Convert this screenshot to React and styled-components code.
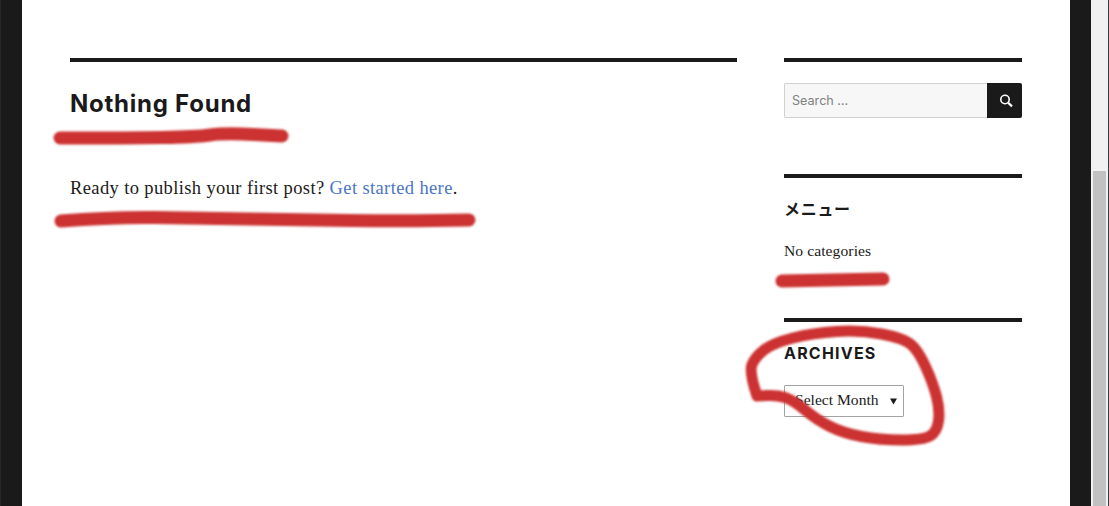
import React from "react";
import styled, { createGlobalStyle } from "styled-components";

const sansStack = `Inter, "Noto Sans CJK JP", sans-serif`;
const serifStack = `"Liberation Serif", "DejaVu Serif", serif`;

const GlobalStyle = createGlobalStyle`
  html, body {
    margin: 0;
    padding: 0;
    height: 100%;
    overflow: hidden;
    background: #fff;
  }
  * {
    box-sizing: border-box;
  }
`;

const Page = styled.div`
  position: relative;
  display: flex;
  width: 1109px;
  height: 506px;
  overflow: hidden;
  color: #1a1a1a;
`;

const Frame = styled.div`
  flex: none;
  width: ${props => props.width}px;
  background: #1a1a1a;
  border-left: ${props => (props.edge ? "1px solid #23282d" : "none")};
`;

const Content = styled.div`
  flex: 1;
  display: flex;
  gap: 47px;
  padding: 58px 48px 0;
  background: #fff;
`;

const Main = styled.main`
  width: 667px;
  border-top: 4px solid #1a1a1a;
`;

const PageTitle = styled.h1`
  margin: 26px 0 0;
  font-family: ${sansStack};
  font-size: 24px;
  line-height: 32px;
  font-weight: 700;
  letter-spacing: 0.75px;
`;

const Lead = styled.p`
  margin: 54px 0 0;
  font-family: ${serifStack};
  font-size: 18.5px;
  line-height: 28px;
  letter-spacing: 0.38px;
  color: #1a1a1a;

  a {
    color: #4b75c4;
    text-decoration: none;
  }
`;

const Sidebar = styled.aside`
  width: 238px;
`;

const Widget = styled.section`
  height: ${props => props.height}px;
  border-top: 4px solid #1a1a1a;
`;

const SearchForm = styled.form`
  display: flex;
  height: 35px;
  margin-top: 21px;
`;

const SearchInput = styled.input`
  flex: 1;
  min-width: 0;
  padding: 0 7px;
  border: 1px solid #d1d1d1;
  border-right: none;
  border-radius: 2px 0 0 2px;
  background: #f7f7f7;
  font-family: ${sansStack};
  font-size: 12.6px;
  outline: none;

  &::placeholder {
    color: #808080;
    opacity: 1;
  }
`;

const SearchButton = styled.button`
  flex: none;
  display: flex;
  align-items: center;
  justify-content: center;
  width: 35px;
  padding: 0;
  border: none;
  border-radius: 0 2px 2px 0;
  background: #1a1a1a;
`;

const WidgetTitle = styled.h2`
  margin: 20px 0 0;
  font-family: ${sansStack};
  font-size: 16px;
  line-height: 23px;
  font-weight: 700;
  letter-spacing: ${props => (props.caps ? "1.2px" : "0.7px")};
  text-transform: ${props => (props.caps ? "uppercase" : "none")};
`;

const SmallText = styled.p`
  margin: 18px 0 0;
  font-family: ${serifStack};
  font-size: 15.6px;
  line-height: 23px;
  letter-spacing: 0.08px;
`;

const SelectWrap = styled.div`
  position: relative;
  width: 120px;
  height: 32px;
  margin-top: 20px;
`;

const MonthSelect = styled.select`
  appearance: none;
  display: block;
  width: 100%;
  height: 100%;
  padding: 0 0 4px 10px;
  border: 1px solid #a3a3a3;
  border-radius: 1px;
  background: #fff;
  color: #1a1a1a;
  font-family: ${serifStack};
  font-size: 15.6px;
`;

const Arrow = styled.svg`
  position: absolute;
  top: 13px;
  right: 7px;
  pointer-events: none;
`;

const Scrollbar = styled.div`
  flex: none;
  display: flex;
  align-items: flex-end;
  justify-content: center;
  width: 17px;
  background: #f1f1f1;
`;

const ScrollThumb = styled.div`
  width: 13px;
  height: 335px;
  background: #c1c1c1;
`;

const Edge = styled.div`
  flex: none;
  width: 1px;
  background: #3a3d42;
`;

const Scribbles = styled.svg`
  position: absolute;
  inset: 0;
  pointer-events: none;
`;

// red marker strokes somebody drew over the screenshot
const marks = [
  { width: 13, points: [[60, 138], [130, 138], [195, 137], [225, 133], [282, 136]] },
  { width: 13, points: [[61, 221], [110, 217], [200, 218], [300, 220], [400, 221], [469, 220]] },
  { width: 13, points: [[782, 281], [830, 280], [883, 279]] },
  {
    width: 11,
    points: [
      [757, 396], [749, 372], [755, 357], [773, 343], [813, 333], [860, 330], [903, 338],
      [918, 350], [933, 383], [940, 410], [937, 432], [923, 440], [880, 440], [843, 433],
      [817, 420], [793, 400], [777, 395], [757, 396],
    ],
  },
];

const smooth = points => {
  let d = `M${points[0][0]} ${points[0][1]}`;
  for (let i = 1; i < points.length - 1; i++) {
    const [x, y] = points[i];
    const [nx, ny] = points[i + 1];
    d += ` Q${x} ${y} ${(x + nx) / 2} ${(y + ny) / 2}`;
  }
  const last = points[points.length - 1];
  return `${d} L${last[0]} ${last[1]}`;
};

const App = () => (
  <Page>
    <GlobalStyle />
    <Frame width={22} edge />
    <Content>
      <Main>
        <PageTitle>Nothing Found</PageTitle>
        <Lead>
          Ready to publish your first post? <a href="#start">Get started here</a>.
        </Lead>
      </Main>
      <Sidebar>
        <Widget height={116}>
          <SearchForm>
            <SearchInput placeholder="Search …" />
            <SearchButton type="button" aria-label="Search">
              <svg width="16" height="16" viewBox="0 0 16 16" fill="none" stroke="#fff">
                <circle cx="8" cy="6.5" r="4.2" strokeWidth="1.6" />
                <path d="M11.2 9.7 L15 13.4" strokeWidth="2.2" />
              </svg>
            </SearchButton>
          </SearchForm>
        </Widget>
        <Widget height={144}>
          <WidgetTitle>メニュー</WidgetTitle>
          <SmallText>No categories</SmallText>
        </Widget>
        <Widget height={120}>
          <WidgetTitle caps>Archives</WidgetTitle>
          <SelectWrap>
            <MonthSelect defaultValue="">
              <option value="">Select Month</option>
            </MonthSelect>
            <Arrow width="7" height="7" viewBox="0 0 7 7">
              <path d="M0 0.5 H7 L3.5 6.5 Z" fill="#1a1a1a" />
            </Arrow>
          </SelectWrap>
        </Widget>
      </Sidebar>
    </Content>
    <Frame width={21} />
    <Scrollbar>
      <ScrollThumb />
    </Scrollbar>
    <Edge />
    <Scribbles width="1109" height="506" viewBox="0 0 1109 506" fill="none">
      <defs>
        <filter id="marker" filterUnits="userSpaceOnUse" x="0" y="0" width="1109" height="506">
          <feGaussianBlur stdDeviation="1" />
        </filter>
      </defs>
      {marks.map((mark, i) => (
        <path
          key={i}
          d={smooth(mark.points)}
          stroke="#cc3333"
          strokeWidth={mark.width}
          strokeLinecap="round"
          strokeLinejoin="round"
          filter="url(#marker)"
        />
      ))}
    </Scribbles>
  </Page>
);

export default App;
